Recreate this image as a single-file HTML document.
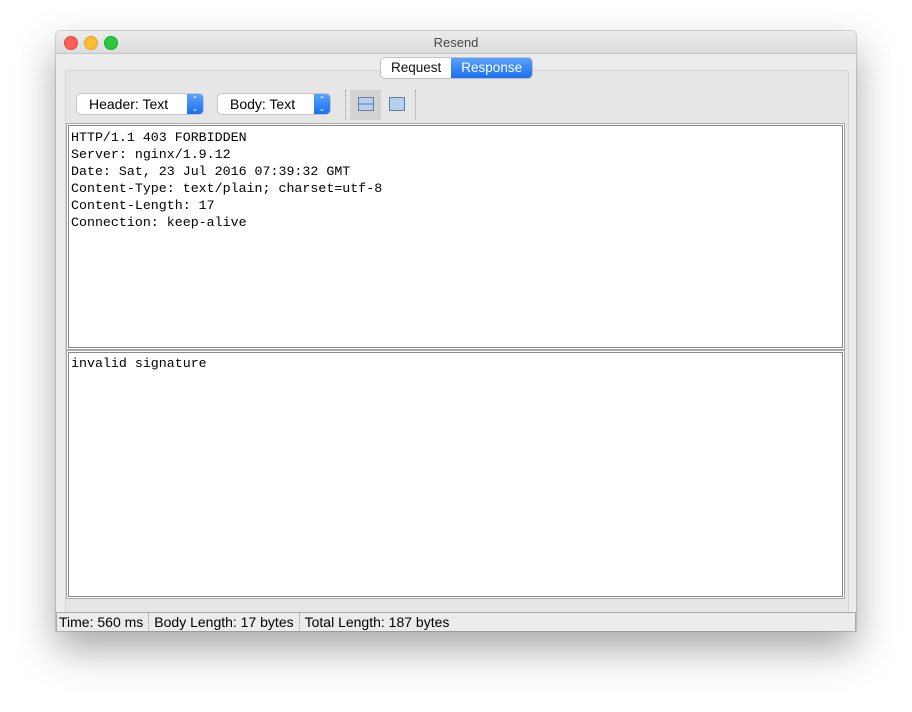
<!DOCTYPE html>
<html><head><style>
body{margin:0;width:912px;height:712px;background:#fff;position:relative;overflow:hidden;font-family:"Liberation Sans",sans-serif;}
.win{position:absolute;left:56px;top:31px;width:800px;height:600px;background:#ececec;border-radius:5px 5px 0 0;box-shadow:0 18px 40px rgba(0,0,0,0.35),0 0 0 1px rgba(0,0,0,0.15);overflow:hidden}
.title{position:absolute;left:0;top:0;width:800px;height:22px;background:linear-gradient(#ececec,#dcdcdc);border-bottom:1px solid #c4c4c4;text-align:center;font-size:13px;line-height:24px;color:#4a4a4a}
.dot{position:absolute;top:5px;width:12px;height:12px;border-radius:50%}
.panel{position:absolute;left:9px;top:39px;width:782px;height:568px;background:#e6e6e6;border:1px solid #d4d4d4;border-radius:3px}
.tabs{position:absolute;left:325px;top:27px;height:20px;display:flex;font-size:13.5px;border-radius:4px;box-shadow:0 0 0 1px #c0c0c0;overflow:hidden;z-index:2}
.tabs div{padding:0 10px;line-height:20px}
.sel{position:absolute;top:63px;height:20px;background:#fff;border-radius:4px;box-shadow:0 0 0 1px #c6c6c6;font-size:14px;line-height:20px;padding-left:12px;box-sizing:border-box}
.arr{position:absolute;right:0;top:0;width:16px;height:20px;background:linear-gradient(#5aa2fb,#1a6ff0);border-radius:0 4px 4px 0;color:#fff;font-size:8px;text-align:center;line-height:9px;padding-top:1px;box-sizing:border-box}
.ta{position:absolute;left:12px;width:775px;background:#fff;border:1px solid #888;box-shadow:0 0 0 1px #fff,0 0 0 2px #aaa;font-family:"Liberation Mono",monospace;font-size:13.3px;line-height:17px;padding:3px 2px;box-sizing:border-box;white-space:pre;color:#000}
.status{position:absolute;left:0;top:581px;width:798px;height:19px;border:1px solid #aaa;background:#ececec;font-size:14px;line-height:19px;display:flex}
.status span{padding:0 5px 0 2px;border-right:1px dotted #999;margin-right:3px}
</style></head><body>
<div class="win">
<div class="title">Resend
<div class="dot" style="left:8px;background:#fc5f57;border:0.5px solid #de4a41"></div>
<div class="dot" style="left:28px;background:#fdbc2e;border:0.5px solid #dea236"></div>
<div class="dot" style="left:48px;background:#29c840;border:0.5px solid #1aab29"></div>
</div>
<div class="panel"></div>
<div class="tabs"><div style="background:#fff;color:#111">Request</div><div style="background:linear-gradient(#5aa2fb,#1a6ff0);color:#fff">Response</div></div>
<div class="sel" style="left:21px;width:126px">Header: Text<div class="arr">⌃<br>⌄</div></div>
<div class="sel" style="left:162px;width:112px">Body: Text<div class="arr">⌃<br>⌄</div></div>
<div style="position:absolute;left:289px;top:59px;height:30px;border-left:1px dotted #999"></div>
<div style="position:absolute;left:294px;top:59px;width:31px;height:30px;background:#d3d3d3"></div>
<div style="position:absolute;left:302px;top:66px;width:14px;height:12px;border:1px solid #5d7fa6;background:linear-gradient(#b8d0ee 45%,#5d7fa6 45%,#5d7fa6 55%,#b8d0ee 55%)"></div>
<div style="position:absolute;left:333px;top:66px;width:14px;height:12px;border:1px solid #5d7fa6;background:#b8d0ee"></div>
<div style="position:absolute;left:359px;top:59px;height:30px;border-left:1px dotted #999"></div>
<div class="ta" style="top:94px;height:223px">HTTP/1.1 403 FORBIDDEN
Server: nginx/1.9.12
Date: Sat, 23 Jul 2016 07:39:32 GMT
Content-Type: text/plain; charset=utf-8
Content-Length: 17
Connection: keep-alive</div>
<div class="ta" style="top:321px;height:245px;padding-top:2px">invalid signature</div>
<div class="status"><span>Time: 560 ms</span><span>Body Length: 17 bytes</span><span style="border:0">Total Length: 187 bytes</span></div>
</div>
</body></html>
